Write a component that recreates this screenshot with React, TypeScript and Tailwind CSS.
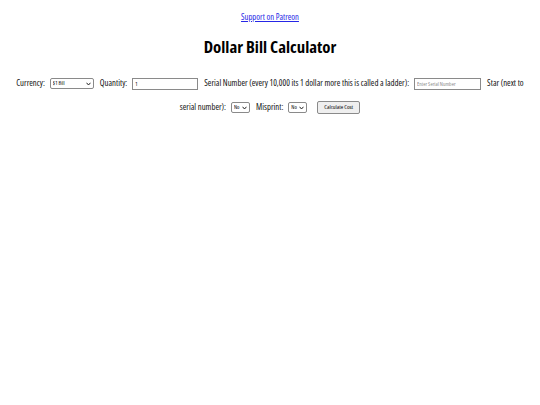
import React from "react";

const Chevron = () => (
  <svg
    className="pointer-events-none absolute right-[3px] top-1/2 -translate-y-1/2"
    width="5"
    height="4"
    viewBox="0 0 10 8"
    fill="none"
  >
    <path d="M1 1.5 L5 6 L9 1.5" stroke="#222" strokeWidth="2" />
  </svg>
);

function Sel({ w, children }: { w: string; children: React.ReactNode }) {
  return (
    <span className={`relative inline-block align-middle ${w}`}>
      <select className="block h-[11px] w-full appearance-none rounded-[2px] border border-[#8a8a8a] bg-white pl-[2px] text-[5.5px] leading-[9px] text-black outline-none">
        {children}
      </select>
      <Chevron />
    </span>
  );
}

export default function App() {
  return (
    <div className="min-h-[405px] w-full bg-white px-[8px] text-center font-['Open_Sans',sans-serif] font-stretch-condensed text-black antialiased">
      <div className="pt-[11px] text-[8.6px] leading-[12px]">
        <a href="#" className="text-[#2626e6] underline">
          Support on Patreon
        </a>
      </div>
      <h1 className="mt-[13px] text-[16.8px] font-bold leading-[22px]">Dollar Bill Calculator</h1>
      <form className="mt-[13px] text-[8.7px] leading-[24px] text-[#111]">
        <label className="mr-[5px]">Currency:</label>
        <span className="mr-[6px] inline-block">
          <Sel w="w-[44px]">
            <option>$1 Bill</option>
            <option>$2 Bill</option>
            <option>$5 Bill</option>
          </Sel>
        </span>
        <label className="mr-[5px]">Quantity:</label>
        <input
          type="number"
          defaultValue="1"
          className="mr-[6px] inline-block h-[12px] w-[66px] appearance-none border border-[#8a8a8a] bg-white px-[2px] align-middle text-[5.5px] leading-[10px] text-black outline-none [&::-webkit-inner-spin-button]:appearance-none"
        />
        <label className="mr-[5px]">
          Serial Number (every 10,000 its 1 dollar more this is called a ladder):
        </label>
        <input
          type="text"
          placeholder="Enter Serial Number"
          className="mr-[6px] inline-block h-[12px] w-[67px] border border-[#8a8a8a] bg-white px-[2px] align-middle text-[5.5px] leading-[10px] text-black outline-none placeholder:text-[#8a8a8a]"
        />
        <label className="mr-[5px]">Star (next to serial number):</label>
        <span className="mr-[6px] inline-block">
          <Sel w="w-[19px]">
            <option>No</option>
            <option>Yes</option>
          </Sel>
        </span>
        <label className="mr-[5px]">Misprint:</label>
        <span className="mr-[10px] inline-block">
          <Sel w="w-[19px]">
            <option>No</option>
            <option>Yes</option>
          </Sel>
        </span>
        <button
          type="button"
          className="inline-block h-[13px] rounded-[2px] border border-[#8a8a8a] bg-[#efefef] px-[6px] align-middle text-[6px] leading-[11px] text-black"
        >
          Calculate Cost
        </button>
      </form>
    </div>
  );
}
